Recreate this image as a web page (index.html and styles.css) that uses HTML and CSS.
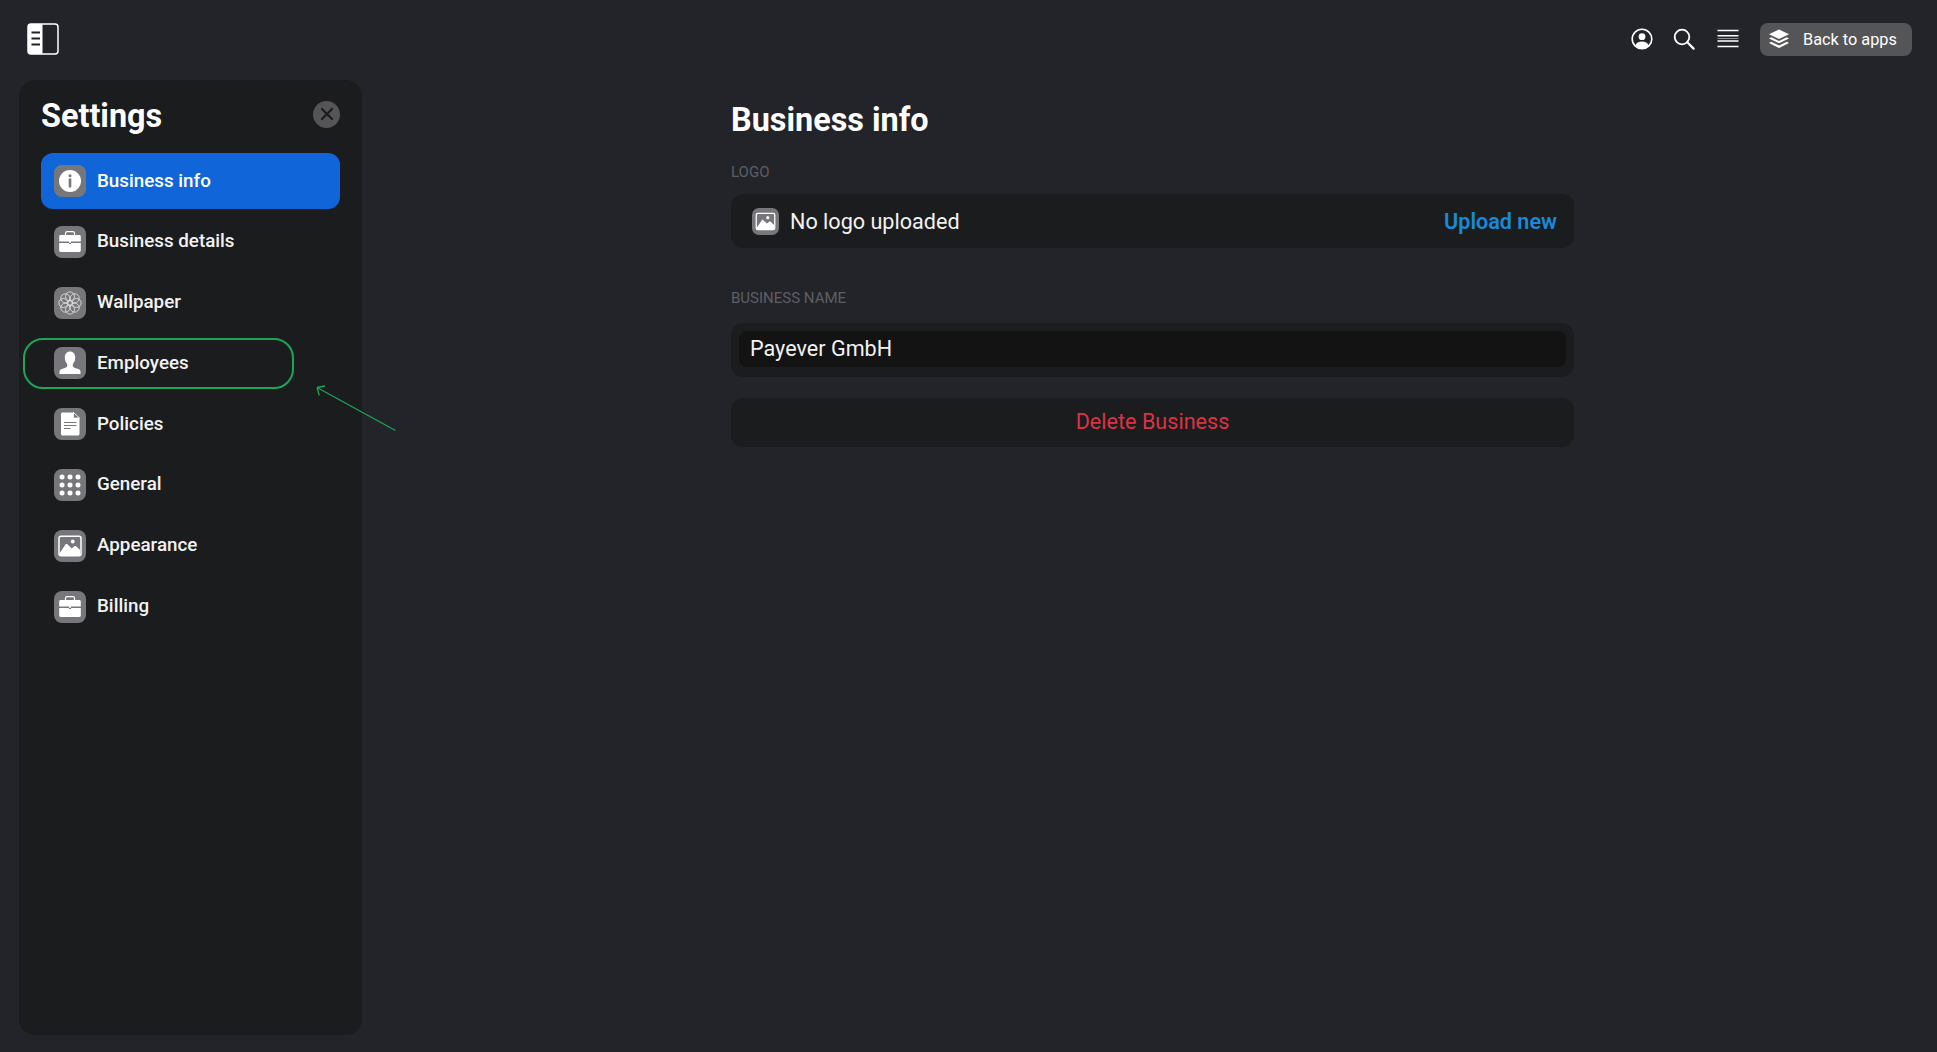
FILE: index.html
```html
<!DOCTYPE html>
<html lang="en">
<head>
<meta charset="utf-8">
<title>Settings</title>
<link rel="stylesheet" href="styles.css">
</head>
<body>
<svg width="0" height="0" class="defs">
  <defs>
    <symbol id="i-case" viewBox="0 0 32 32">
      <path d="M11.5 9V7.2c0-.9.7-1.6 1.6-1.6h5.8c.9 0 1.6.7 1.6 1.6V9" fill="none" stroke="#fff" stroke-width="1.2"/>
      <path d="M6.6 9h18.8c.8 0 1.4.6 1.4 1.4v5.2H17v1.2h-2v-1.2H5.2v-5.2C5.200 9.600 5.800 9 6.600 9z" fill="#fff"/>
      <path d="M5.200 16.900H15v1.100h2v-1.100h9.800v7.700c0 .8-.6 1.400-1.400 1.400H6.600c-.8 0-1.400-.6-1.400-1.400z" fill="#fff"/>
    </symbol>
    <symbol id="i-image" viewBox="0 0 32 32">
      <rect x="5" y="6.300" width="22" height="19.400" rx="2" fill="none" stroke="#fff" stroke-width="1.500"/>
      <circle cx="18.700" cy="11.500" r="1.900" fill="#fff"/>
      <path d="M5.800 23v2.200h20.400V20l-4.400-3.900c-.4-.3-.9-.3-1.300 0l-2.700 2.300-4.700-4.300c-.4-.3-.9-.3-1.300 0z" fill="#fff"/>
    </symbol>
  </defs>
</svg>
<div class="app">
  <header class="topbar">
    <svg class="logo" viewBox="0 0 32 32" role="img" aria-label="Toggle sidebar">
      <rect x="1" y="1" width="30" height="30" rx="3" fill="none" stroke="#fff" stroke-width="1.500"/>
      <path d="M3 1h12.500v30H3.500A2.500 2.500 0 0 1 1 28.500v-25A2.500 2.500 0 0 1 3 1z" fill="#fff"/>
      <path d="M4.500 9.500h8.500M4.500 15.500h8.500M4.500 21.500h8.500" stroke="#22242a" stroke-width="2.200"/>
    </svg>
    <div class="top-actions">
      <svg class="top-icon" viewBox="0 0 22 22" role="img" aria-label="Profile">
        <circle cx="11" cy="11" r="9.800" fill="none" stroke="#fff" stroke-width="1.600"/>
        <circle cx="11" cy="8.700" r="3.400" fill="#fff"/>
        <path d="M4.200 17.400c1-2.800 3.600-4 6.800-4s5.800 1.200 6.800 4A9.800 9.800 0 0 1 11 20.600a9.800 9.800 0 0 1-6.800-3.200z" fill="#fff"/>
      </svg>
      <svg class="top-icon" viewBox="0 0 22 22" role="img" aria-label="Search">
        <circle cx="9" cy="9" r="7.300" fill="none" stroke="#fff" stroke-width="1.800"/>
        <path d="M14.300 14.300l6.300 6.300" stroke="#fff" stroke-width="2.200" stroke-linecap="round"/>
      </svg>
      <svg class="top-icon" viewBox="0 0 22 22" role="img" aria-label="Menu">
        <path d="M.500 2.500h21M.500 7.800h21M.500 13.100h21M.500 18.500h21" stroke="#fff" stroke-width="1.500"/>
        <path d="M.500 10.500h21" stroke="#8b8b8b" stroke-width="1"/>
      </svg>
      <button class="back-btn">
        <svg class="back-icon" viewBox="0 0 22 20">
          <path d="M11 .500l10 4.700-10 4.700L1 5.200z" fill="#fff"/>
          <path d="M3.200 8.300L1 9.500l10 4.700 10-4.700-2.200-1.200-7.800 3.700z" fill="#fff"/>
          <path d="M3.200 12.700L1 13.900l10 5 10-5-2.200-1.200-7.800 3.800z" fill="#fff"/>
        </svg>
        <span>Back to apps</span>
      </button>
    </div>
  </header>
  <div class="layout">
    <aside class="sidebar">
      <div class="side-head">
        <h2 class="side-title">Settings</h2>
        <button class="close" aria-label="Close">
          <svg viewBox="0 0 14 14" class="close-x"><path d="M2 2l10 10M12 2L2 12" stroke="#1b1c1e" stroke-width="2.200" stroke-linecap="round"/></svg>
        </button>
      </div>
      <nav class="nav">
        <a class="nav-item active">
          <span class="nav-icon"><svg viewBox="0 0 32 32"><circle cx="16" cy="16" r="11" fill="#fff"/><circle cx="16" cy="10.800" r="1.500" fill="#77777b"/><rect x="14.700" y="13.600" width="2.600" height="8.800" rx=".6" fill="#77777b"/></svg></span>
          <span class="nav-label">Business info</span>
        </a>
        <a class="nav-item">
          <span class="nav-icon"><svg viewBox="0 0 32 32"><use href="#i-case"/></svg></span>
          <span class="nav-label">Business details</span>
        </a>
        <a class="nav-item">
          <span class="nav-icon"><svg viewBox="0 0 32 32" fill="none" stroke="#dedede" stroke-width=".9">
            <circle cx="16" cy="16" r="2.400"/>
            <circle cx="16" cy="9.400" r="4.500"/><circle cx="16" cy="22.600" r="4.500"/>
            <circle cx="9.400" cy="16" r="4.500"/><circle cx="22.600" cy="16" r="4.500"/>
            <circle cx="11.300" cy="11.300" r="4.500"/><circle cx="20.700" cy="11.300" r="4.500"/>
            <circle cx="11.300" cy="20.700" r="4.500"/><circle cx="20.700" cy="20.700" r="4.500"/>
          </svg></span>
          <span class="nav-label">Wallpaper</span>
        </a>
        <a class="nav-item">
          <span class="nav-icon"><svg viewBox="0 0 32 32"><path d="M16 4.500c3 0 5.200 2.300 5.200 6 0 2.800-1 5.200-2.400 6.500v1.800c0 1 .8 1.600 2.200 2.100l3.300 1.100c1.500.5 2.200 1.500 2.200 2.800v2.200H5.500v-2.200c0-1.300.7-2.300 2.200-2.800l3.300-1.100c1.400-.5 2.200-1.100 2.200-2.100V17c-1.400-1.300-2.400-3.700-2.400-6.500 0-3.700 2.200-6 5.200-6z" fill="#fff"/></svg></span>
          <span class="nav-label">Employees</span>
        </a>
        <a class="nav-item">
          <span class="nav-icon"><svg viewBox="0 0 32 32"><path d="M8.500 4.500h11.300L25.500 10v16c0 .8-.7 1.500-1.500 1.500H8.500C7.700 27.500 7 26.800 7 26V6c0-.8.700-1.500 1.500-1.500z" fill="#fff"/><path d="M19.500 4.500v4.700c0 .5.300.8.800.8h5.200z" fill="#77777b" stroke="#fff" stroke-width=".8"/><path d="M10 14.500h12.500M10 17.500h12.500M10 20.500h6.500" stroke="#77777b" stroke-width="1"/></svg></span>
          <span class="nav-label">Policies</span>
        </a>
        <a class="nav-item">
          <span class="nav-icon"><svg viewBox="0 0 32 32" fill="#fff">
            <circle cx="8" cy="8" r="2.500"/><circle cx="16" cy="8" r="2.500"/><circle cx="24" cy="8" r="2.500"/>
            <circle cx="8" cy="16" r="2.500"/><circle cx="16" cy="16" r="2.500"/><circle cx="24" cy="16" r="2.500"/>
            <circle cx="8" cy="24" r="2.500"/><circle cx="16" cy="24" r="2.500"/><circle cx="24" cy="24" r="2.500"/>
          </svg></span>
          <span class="nav-label">General</span>
        </a>
        <a class="nav-item">
          <span class="nav-icon"><svg viewBox="0 0 32 32"><use href="#i-image"/></svg></span>
          <span class="nav-label">Appearance</span>
        </a>
        <a class="nav-item">
          <span class="nav-icon"><svg viewBox="0 0 32 32"><use href="#i-case"/></svg></span>
          <span class="nav-label">Billing</span>
        </a>
      </nav>
    </aside>
    <main class="content">
      <h1 class="page-title">Business info</h1>
      <div class="field-label logo-label">LOGO</div>
      <section class="card logo-card">
        <span class="logo-icon"><svg viewBox="0 0 32 32"><use href="#i-image"/></svg></span>
        <span class="logo-text">No logo uploaded</span>
        <a class="upload">Upload new</a>
      </section>
      <div class="field-label name-label">BUSINESS NAME</div>
      <section class="card name-card">
        <div class="name-input">Payever GmbH</div>
      </section>
      <button class="card delete">Delete Business</button>
    </main>
  </div>
</div>
<div class="callout-ring"></div>
<svg class="callout-arrow" viewBox="0 0 90 56">
  <path d="M84.500 46.500L6 3.500M6 3.500l8-1.500M6 3.500l2.300 8" fill="none" stroke="#1fa457" stroke-width="1.300"/>
</svg>
</body>
</html>
```
FILE: styles.css
```css
* { box-sizing: border-box; }
html, body { margin: 0; height: 100%; }
body {
  background: #22242a;
  color: #fff;
  font-family: Roboto, "Liberation Sans", sans-serif;
  overflow: hidden;
  position: relative;
}
.defs { position: absolute; }
.app { display: flex; flex-direction: column; height: 1052px; padding: 0 25px 17px 19px; }
.topbar {
  display: flex;
  align-items: center;
  justify-content: space-between;
  height: 80px;
  padding: 0 0 2px 8px;
  flex: none;
}
.logo { width: 32px; height: 32px; display: block; }
.top-actions { display: flex; align-items: center; }
.top-icon { width: 22px; height: 22px; margin-right: 20px; display: block; }
.top-icon:nth-child(2) { margin-right: 22px; }
.top-icon:nth-child(3) { margin-right: 21px; }
.back-btn {
  display: flex;
  align-items: center;
  width: 152px;
  height: 33px;
  padding: 0 0 0 8px;
  border: 0;
  border-radius: 8px;
  background: #555557;
  color: #fff;
  font: 400 16.300px Roboto, sans-serif;
}
.back-icon { width: 22px; height: 20px; margin-right: 13px; flex: none; }

.layout { display: flex; flex: 1; min-height: 0; }
.sidebar {
  width: 343px;
  flex: none;
  background: #1b1c1e;
  border-radius: 16px;
  padding: 0 22px;
}
.side-head { display: flex; align-items: center; justify-content: space-between; height: 68px; margin-bottom: 5px; }
.side-title { margin: 0; font-size: 32.400px; font-weight: 700; line-height: 1; padding-top: 4px; }
.close {
  width: 27px;
  height: 27px;
  padding: 0;
  border: 0;
  border-radius: 50%;
  background: #555557;
  display: flex;
  align-items: center;
  justify-content: center;
}
.close-x { width: 14px; height: 14px; display: block; }
.nav { display: flex; flex-direction: column; gap: 4.800px; width: 299px; }
.nav-item {
  display: flex;
  align-items: center;
  height: 56px;
  padding-left: 13px;
  border-radius: 12px;
  font-size: 18.800px;
  font-weight: 500;
  color: #f2f2f2;
}
.nav-label { padding-bottom: 1px; }
.nav-item.active { background: #1066d8; color: #fff; }
.nav-icon {
  width: 32px;
  height: 32px;
  margin-right: 11px;
  flex: none;
  background: #77777b;
  border-radius: 8px;
}
.nav-icon svg, .logo-icon svg { display: block; width: 100%; height: 100%; }

.content {
  width: 843px;
  margin-left: 369px;
  flex: none;
}
.page-title { margin: 16px 0 0; font-size: 32.400px; font-weight: 700; line-height: 48px; }
.field-label { font-size: 15px; line-height: 16px; color: #5e5f63; }
.logo-label { margin-top: 20px; }
.name-label { margin-top: 42px; }
.card { background: #1b1c1e; border-radius: 12px; display: block; }
.logo-card {
  margin-top: 14px;
  height: 54px;
  display: flex;
  align-items: center;
  padding: 0 17px 0 21px;
}
.logo-icon { width: 27px; height: 27px; background: #77777b; border-radius: 7px; margin-right: 11px; flex: none; }
.logo-text { flex: 1; font-size: 21.600px; color: #f2f2f2; }
.upload { font-size: 21.600px; font-weight: 600; color: #1a8ad8; }
.name-card { margin-top: 17px; height: 54px; padding: 8px; }
.name-input {
  height: 36px;
  background: #131313;
  border-radius: 8px;
  padding-left: 11px;
  font-size: 21.600px;
  line-height: 36px;
  color: #f2f2f2;
}
.delete {
  margin-top: 21px;
  width: 100%;
  height: 49px;
  padding: 0 0 2px;
  border: 0;
  color: #db3346;
  font: 400 21.600px Roboto, sans-serif;
}
.callout-ring {
  position: absolute;
  left: 23px;
  top: 338px;
  width: 271px;
  height: 51px;
  border: 2px solid #1fa457;
  border-radius: 20px;
}
.callout-arrow { position: absolute; left: 311px; top: 384px; width: 90px; height: 56px; }
```
